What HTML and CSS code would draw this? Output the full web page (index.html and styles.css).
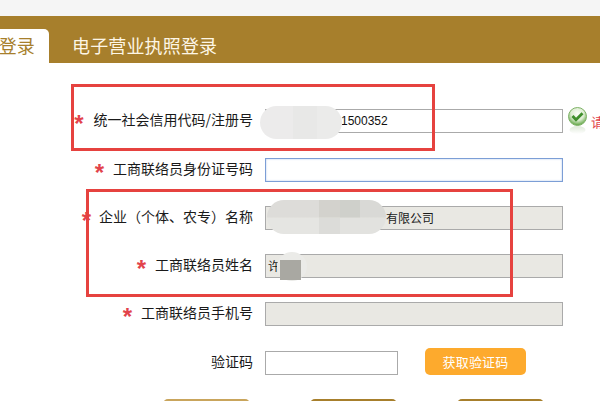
FILE: index.html
```html
<!DOCTYPE html>
<html lang="zh-CN">
<head>
<meta charset="utf-8">
<title>电子营业执照登录</title>
<link rel="stylesheet" href="styles.css">
</head>
<body>
<div class="page">
  <div class="topstrip"></div>
  <div class="tabs">
    <div class="tab active">登录</div>
    <div class="tab">电子营业执照登录</div>
  </div>
  <form class="form">
    <div class="row loose">
      <label class="label"><span class="star s1">*</span>统一社会信用代码/注册号</label>
      <div class="field value">1500352</div>
      <svg class="ok" width="22" height="32" viewBox="0 0 22 32">
        <defs>
          <radialGradient id="g" cx="50%" cy="35%" r="60%"><stop offset="0" stop-color="#fbfdf8"/><stop offset="0.6" stop-color="#dcecd0"/><stop offset="1" stop-color="#6fae55"/></radialGradient>
          <linearGradient id="r" x1="0" y1="0" x2="0" y2="1"><stop offset="0" stop-color="#dfe9d9"/><stop offset="1" stop-color="#fff"/></linearGradient>
        </defs>
        <ellipse cx="10.5" cy="24" rx="8" ry="4" fill="url(#r)"/>
        <circle cx="10.5" cy="10.5" r="9" fill="url(#g)" stroke="#7fb368" stroke-width="1"/>
        <path d="M5.5 10 L9 13.8 L15.5 7.2" fill="none" stroke="#3f8f2c" stroke-width="2.8"/>
      </svg>
      <span class="hint">请</span>
    </div>
    <div class="row">
      <label class="label"><span class="star s2">*</span>工商联络员身份证号码</label>
      <div class="field focus"></div>
    </div>
    <div class="row">
      <label class="label"><span class="star s3">*</span>企业（个体、农专）名称</label>
      <div class="field ro end">有限公司</div>
    </div>
    <div class="row">
      <label class="label"><span class="star s2">*</span>工商联络员姓名</label>
      <div class="field ro">许</div>
    </div>
    <div class="row loose">
      <label class="label"><span class="star s2">*</span>工商联络员手机号</label>
      <div class="field ro"></div>
    </div>
    <div class="row captcha">
      <label class="label">验证码</label>
      <div class="field short"></div>
      <button type="button" class="getcode">获取验证码</button>
    </div>
    <div class="actions">
      <button type="button" class="act pale"></button>
      <button type="button" class="act"></button>
      <button type="button" class="act"></button>
    </div>
  </form>

  <div class="blob b1"></div>
  <div class="blob b2"></div>
  <div class="blob b3"></div>
  <div class="blob b4"></div>
  <div class="mark m1"></div>
  <div class="mark m2"></div>
</div>
</body>
</html>
```
FILE: styles.css
```css
html, body { margin: 0; padding: 0; }
body { background: #fff; font-family: "Noto Sans CJK SC", "Liberation Sans", sans-serif; color: #1a1a1a; }
.page { position: relative; width: 600px; height: 401px; overflow: hidden; }
.topstrip { height: 16px; background: #f5f5f5; }
.tabs { height: 47px; background: #a77f2c; display: flex; align-items: flex-end; }
.tab { height: 34px; line-height: 33px; font-size: 18px; letter-spacing: 0.15px; color: #fdf6e6; padding-left: 23px; }
.tab.active { width: 49px; padding: 0 14px 0 0; box-sizing: border-box; background: #fff; color: #a77f2c; border-radius: 0 5px 0 0; text-align: right; white-space: nowrap; overflow: hidden; direction: rtl; }
.form { padding-top: 46px; }
.row { display: flex; align-items: center; height: 24px; margin-bottom: 24px; }
.row.loose { margin-bottom: 25px; }
.label { flex: none; align-self: flex-start; width: 253px; margin-right: 12px; text-align: right; font-size: 14px; line-height: 20px; white-space: nowrap; }
.star { color: #e2434b; font-family: "Liberation Sans", sans-serif; font-weight: 700; font-size: 24px; line-height: 14px; vertical-align: -7px; }
.s1 { margin-right: 10px; }
.s2 { margin-right: 9px; }
.s3 { margin-right: 8px; }
.field { flex: none; width: 298px; height: 24px; box-sizing: border-box; border: 1px solid #aaa; background: #fff; font-size: 12px; line-height: 22px; padding-left: 2px; }
.value { font-family: "Liberation Sans", sans-serif; padding-left: 75px; color: #111; }
.focus { border: 1px solid #7c9ed6; box-shadow: inset 0 0 2px #a9c0e6; }
.ro { background: #e9e8e3; }
.end { padding-left: 120px; }
.ok { flex: none; margin: -3px 0 0 4px; align-self: flex-start; }
.hint { flex: none; color: #e2434b; font-size: 13px; margin-left: 2px; }
.captcha { margin-bottom: 0; }
.short { width: 133px; }
.getcode { flex: none; width: 101px; height: 27px; margin: -3px 0 0 27px; border: 0; border-radius: 5px; background: #fdaa2d; color: #fff; font: 13px "Noto Sans CJK SC", sans-serif; letter-spacing: 0.2px; padding: 0; }
.actions { display: flex; margin-top: 24px; padding-left: 163px; gap: 60px; }
.act { width: 87px; height: 30px; border: 0; border-radius: 5px; background: #a77f2c; flex: none; }
.pale { background: #c9a55c; }
.blob { position: absolute; filter: blur(0.4px); }
.b1 { left: 260px; top: 106px; width: 82px; height: 33px; border-radius: 17px; background: linear-gradient(90deg, #ecebeb 0 40%, #e8e8e7 40% 70%, #ebebea 70%); }
.b2 { left: 267px; top: 200px; width: 119px; height: 34px; border-radius: 17px; background-repeat: no-repeat; background-size: 100% 52%, 100% 48%; background-position: top, bottom; background-image: linear-gradient(90deg, #dddcd9 0 44%, #d3d2cd 44% 61%, #cfd0cb 61% 78%, #d9d9d6 78%), linear-gradient(90deg, #e5e5e2 0 44%, #dcdcd9 44% 61%, #e2e2df 61% 78%, #e2e2df 78%); }
.b3 { left: 277px; top: 252px; width: 30px; height: 29px; border-radius: 50%; background: #ebebe8; }
.b4 { left: 280px; top: 260px; width: 21px; height: 20px; background: #a9a8a2; }
.mark { position: absolute; box-sizing: border-box; border: 3px solid #e6423f; }
.m1 { left: 71px; top: 84px; width: 364px; height: 67px; }
.m2 { left: 86px; top: 189px; width: 427px; height: 108px; }
```
